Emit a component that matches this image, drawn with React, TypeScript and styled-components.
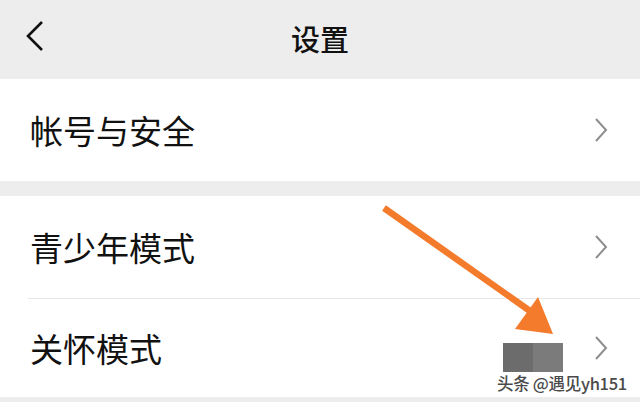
import styled, {createGlobalStyle} from "styled-components";

const GlobalStyle = createGlobalStyle`
  html, body {
    margin: 0;
    padding: 0;
    background: #ededed;
  }
  body {
    font-family: "Noto Sans CJK SC", "Noto Sans", sans-serif;
  }
`

function BackIcon() {
    return (
        <svg width="20" height="32" viewBox="0 0 20 32">
            <polyline points="16,2 2,16 16,30" fill="none" stroke="#111" strokeWidth="2.6"/>
        </svg>
    )
}

function ChevronIcon() {
    return (
        <svg width="14" height="26" viewBox="0 0 14 26">
            <polyline points="2,2 12,13 2,24" fill="none" stroke="#8e8e8e" strokeWidth="2"/>
        </svg>
    )
}

function ArrowOverlay() {
    return (
        <ArrowSvg width="640" height="402" viewBox="0 0 640 402">
            <line x1="384" y1="208" x2="530" y2="311" stroke="#f47a2c" strokeWidth="6.5" strokeLinecap="butt"/>
            <polygon points="538,297 515,329 553,334" fill="#f47a2c"/>
        </ArrowSvg>
    )
}

const items = [
    {group: 0, label: "帐号与安全"},
    {group: 1, label: "青少年模式"},
    {group: 1, label: "关怀模式"},
];

function App() {
    const groups = [0, 1].map(g => items.filter(i => i.group === g));

    return (
        <Page>
            <GlobalStyle/>
            <Header>
                <BackButton type="button"><BackIcon/></BackButton>
                <Title>设置</Title>
            </Header>
            {groups.map((group, gi) => (
                <Group key={gi}>
                    {group.map((item, i) => (
                        <Row key={item.label} $divider={i > 0} $short={gi === 1 && i === 1}>
                            <Label>{item.label}</Label>
                            <ChevronIcon/>
                        </Row>
                    ))}
                </Group>
            ))}
            <ArrowOverlay/>
            <Watermark>
                <Blur>
                    <BlurHalf $tone="#6c6c6c"/>
                    <BlurHalf $tone="#7b7b7b"/>
                </Blur>
                <WatermarkText>头条 @遇见yh151</WatermarkText>
            </Watermark>
        </Page>
    )
}

const Page = styled.div`
  position: relative;
  width: 640px;
  height: 402px;
  overflow: hidden;
  background: #ededed;
`

const Header = styled.header`
  height: 79px;
  display: flex;
  align-items: center;
  justify-content: center;
  position: relative;
`

const BackButton = styled.button`
  position: absolute;
  left: 26px;
  top: 20px;
  border: none;
  background: none;
  padding: 0;
  display: flex;
`

const Title = styled.h1`
  margin: 0 0 4px;
  font-size: 29px;
  font-weight: 500;
  color: #111;
`

const Group = styled.section`
  background: #fff;
  padding-left: 28px;
  margin-bottom: 15px;
`

const Row = styled.div<{ $divider: boolean; $short: boolean }>`
  height: ${p => p.$short ? 98 : 102}px;
  display: flex;
  align-items: center;
  padding-right: 32px;
  border-top: ${p => p.$divider ? "1px solid #e6e6e6" : "none"};
`

const Label = styled.span`
  flex: 1;
  padding-left: 2px;
  font-size: 33px;
  color: #111;
`

const ArrowSvg = styled.svg`
  position: absolute;
  left: 0;
  top: 0;
  pointer-events: none;
`

const Watermark = styled.div`
  position: absolute;
  left: 497px;
  top: 343px;
  display: flex;
  flex-direction: column;
  align-items: flex-start;
`

const Blur = styled.div`
  display: flex;
  margin-left: 6px;
  height: 29px;
`

const BlurHalf = styled.div<{ $tone: string }>`
  width: 30px;
  background: ${p => p.$tone};
`

const WatermarkText = styled.span`
  margin-top: 1px;
  font-size: 16.5px;
  line-height: 20px;
  font-weight: 500;
  color: #4a4a4a;
  white-space: nowrap;
  letter-spacing: -0.3px;
  text-shadow: 0 0 2px #fff, 0 0 1px #fff;
`

export default App;
